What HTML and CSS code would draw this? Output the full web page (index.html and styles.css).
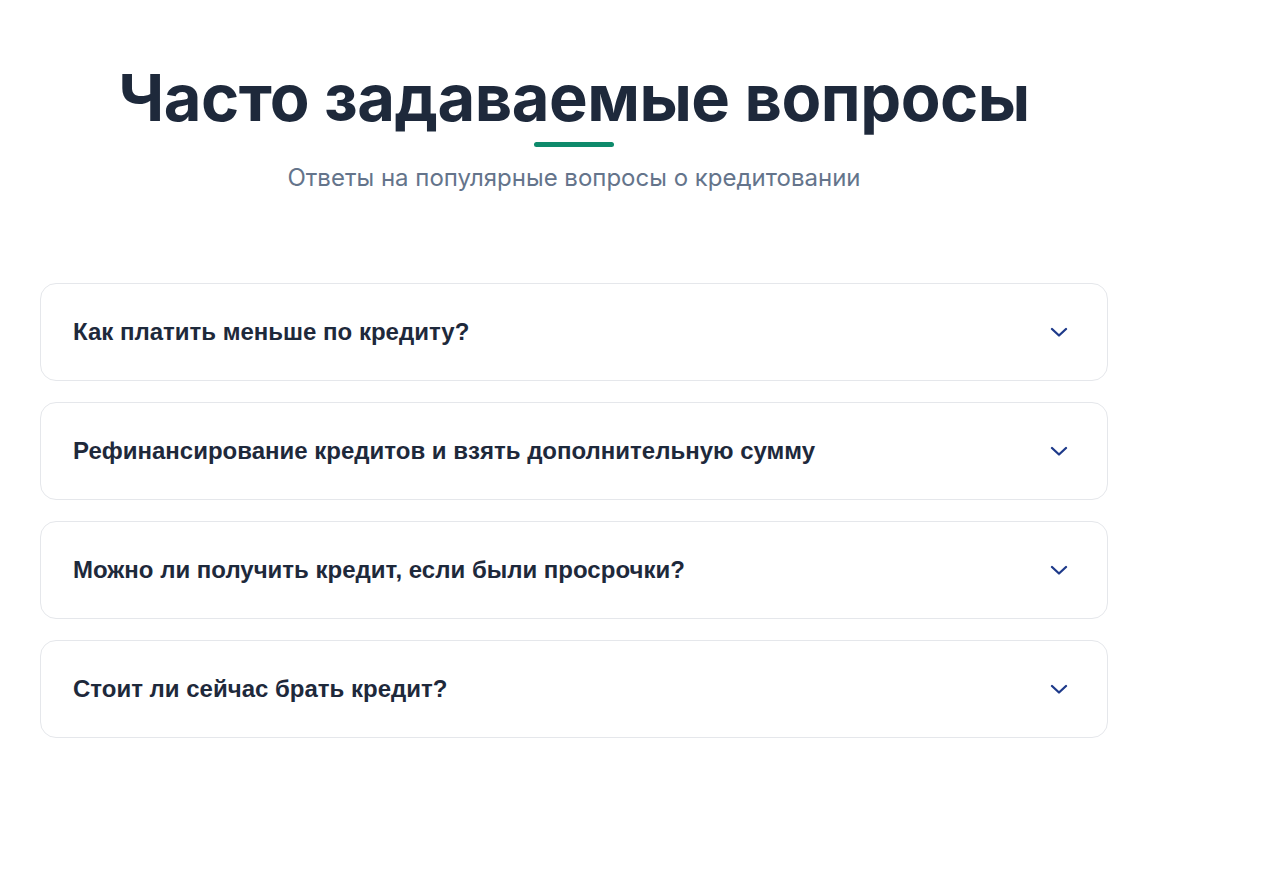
FILE: index.html
```html
<!DOCTYPE html>
<html lang="ru">
<head>
<meta charset="utf-8">
<title>FAQ</title>
<link rel="stylesheet" href="styles.css">
</head>
<body>
<section class="faq">
  <header class="faq-header">
    <h1 class="faq-title">Часто задаваемые вопросы</h1>
    <div class="faq-bar"></div>
    <p class="faq-subtitle">Ответы на популярные вопросы о кредитовании</p>
  </header>
  <div class="faq-list">
    <div class="faq-item">
      <span class="faq-q">Как платить меньше по кредиту?</span>
      <svg class="faq-icon" viewBox="0 0 18 10" fill="none" stroke="currentColor" stroke-width="2.3" stroke-linecap="round" stroke-linejoin="round"><path d="M2 2l7 6.5 7-6.5"/></svg>
    </div>
    <div class="faq-item">
      <span class="faq-q">Рефинансирование кредитов и взять дополнительную сумму</span>
      <svg class="faq-icon" viewBox="0 0 18 10" fill="none" stroke="currentColor" stroke-width="2.3" stroke-linecap="round" stroke-linejoin="round"><path d="M2 2l7 6.5 7-6.5"/></svg>
    </div>
    <div class="faq-item">
      <span class="faq-q">Можно ли получить кредит, если были просрочки?</span>
      <svg class="faq-icon" viewBox="0 0 18 10" fill="none" stroke="currentColor" stroke-width="2.3" stroke-linecap="round" stroke-linejoin="round"><path d="M2 2l7 6.5 7-6.5"/></svg>
    </div>
    <div class="faq-item">
      <span class="faq-q">Стоит ли сейчас брать кредит?</span>
      <svg class="faq-icon" viewBox="0 0 18 10" fill="none" stroke="currentColor" stroke-width="2.3" stroke-linecap="round" stroke-linejoin="round"><path d="M2 2l7 6.5 7-6.5"/></svg>
    </div>
  </div>
</section>
</body>
</html>
```

FILE: styles.css
```css
html, body {
  margin: 0;
  padding: 0;
  background: #ffffff;
}
body {
  font-family: Inter, "Noto Sans", sans-serif;
  color: #1e293b;
}
.faq {
  width: 1068px;
  margin-left: 40px;
  padding-top: 58px;
}
.faq-header {
  display: flex;
  flex-direction: column;
  align-items: center;
}
.faq-title {
  margin: 0;
  font-size: 65px;
  font-weight: 700;
  line-height: 80px;
  color: #1e293b;
  letter-spacing: -0.5px;
}
.faq-bar {
  width: 80px;
  height: 5px;
  border-radius: 3px;
  background: #0e8a6b;
  margin-top: 4px;
}
.faq-subtitle {
  margin: 15px 0 0;
  font-size: 24px;
  line-height: 32px;
  color: #64748b;
}
.faq-list {
  margin-top: 89px;
  display: flex;
  flex-direction: column;
  gap: 21px;
}
.faq-item {
  display: flex;
  align-items: center;
  justify-content: space-between;
  height: 96px;
  padding: 0 39px 0 32px;
  border: 1px solid #e5e7eb;
  border-radius: 16px;
  background: #fff;
}
.faq-q {
  font-family: "Liberation Sans", Arial, sans-serif;
  font-weight: 700;
  font-size: 24px;
  color: #1e293b;
}
.faq-icon {
  width: 18px;
  height: 10px;
  color: #1e3a8a;
}
```
